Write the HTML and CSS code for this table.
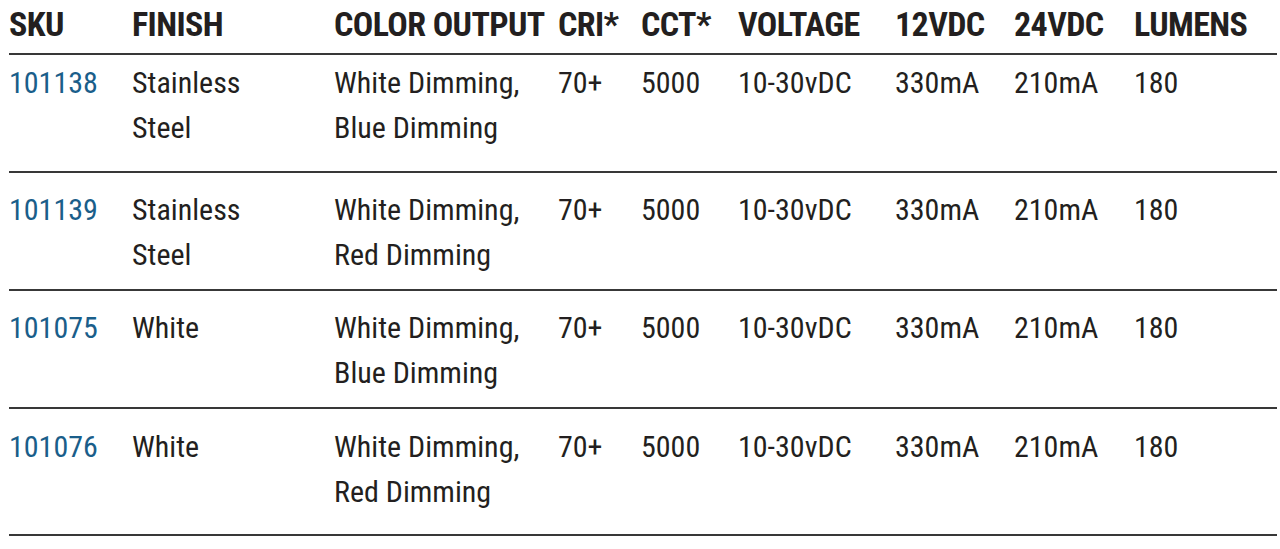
FILE: index.html
```html
<!DOCTYPE html>
<html>
<head>
<meta charset="utf-8">
<link rel="stylesheet" href="styles.css">
</head>
<body>
<div class="spec">
  <div class="row head">
    <div>SKU</div><div>FINISH</div><div>COLOR OUTPUT</div><div>CRI*</div><div>CCT*</div><div>VOLTAGE</div><div>12VDC</div><div>24VDC</div><div>LUMENS</div>
  </div>
  <div class="row first">
    <div class="sku">101138</div><div>Stainless<br>Steel</div><div>White Dimming,<br>Blue Dimming</div><div>70+</div><div>5000</div><div>10-30vDC</div><div>330mA</div><div>210mA</div><div>180</div>
  </div>
  <div class="row">
    <div class="sku">101139</div><div>Stainless<br>Steel</div><div>White Dimming,<br>Red Dimming</div><div>70+</div><div>5000</div><div>10-30vDC</div><div>330mA</div><div>210mA</div><div>180</div>
  </div>
  <div class="row">
    <div class="sku">101075</div><div>White</div><div>White Dimming,<br>Blue Dimming</div><div>70+</div><div>5000</div><div>10-30vDC</div><div>330mA</div><div>210mA</div><div>180</div>
  </div>
  <div class="row last">
    <div class="sku">101076</div><div>White</div><div>White Dimming,<br>Red Dimming</div><div>70+</div><div>5000</div><div>10-30vDC</div><div>330mA</div><div>210mA</div><div>180</div>
  </div>
</div>
</body>
</html>
```
FILE: styles.css
```css
html, body {
  margin: 0;
  padding: 0;
  background: #fff;
}
body {
  font-family: "Roboto Condensed", "Liberation Sans Narrow", Roboto, sans-serif;
  font-stretch: condensed;
  color: #231f20;
}
.spec {
  width: 1268px;
  margin-left: 9px;
}
.row {
  display: grid;
  grid-template-columns: 123px 202px 224px 83px 97px 157px 119px 120px 1fr;
  border-bottom: 2px solid #383838;
  font-size: 30px;
  line-height: 45px;
  padding: 14px 0 12px 0;
  white-space: nowrap;
}
.row.head {
  font-weight: 700;
  font-size: 34px;
  letter-spacing: -0.6px;
  line-height: 44px;
  padding: 2px 0 7px 0;
}
.row.first {
  padding: 5px 0 21px 0;
}
.row.last {
  padding: 15px 0 20px 0;
}
.sku {
  color: #1a5e8a;
}
```
